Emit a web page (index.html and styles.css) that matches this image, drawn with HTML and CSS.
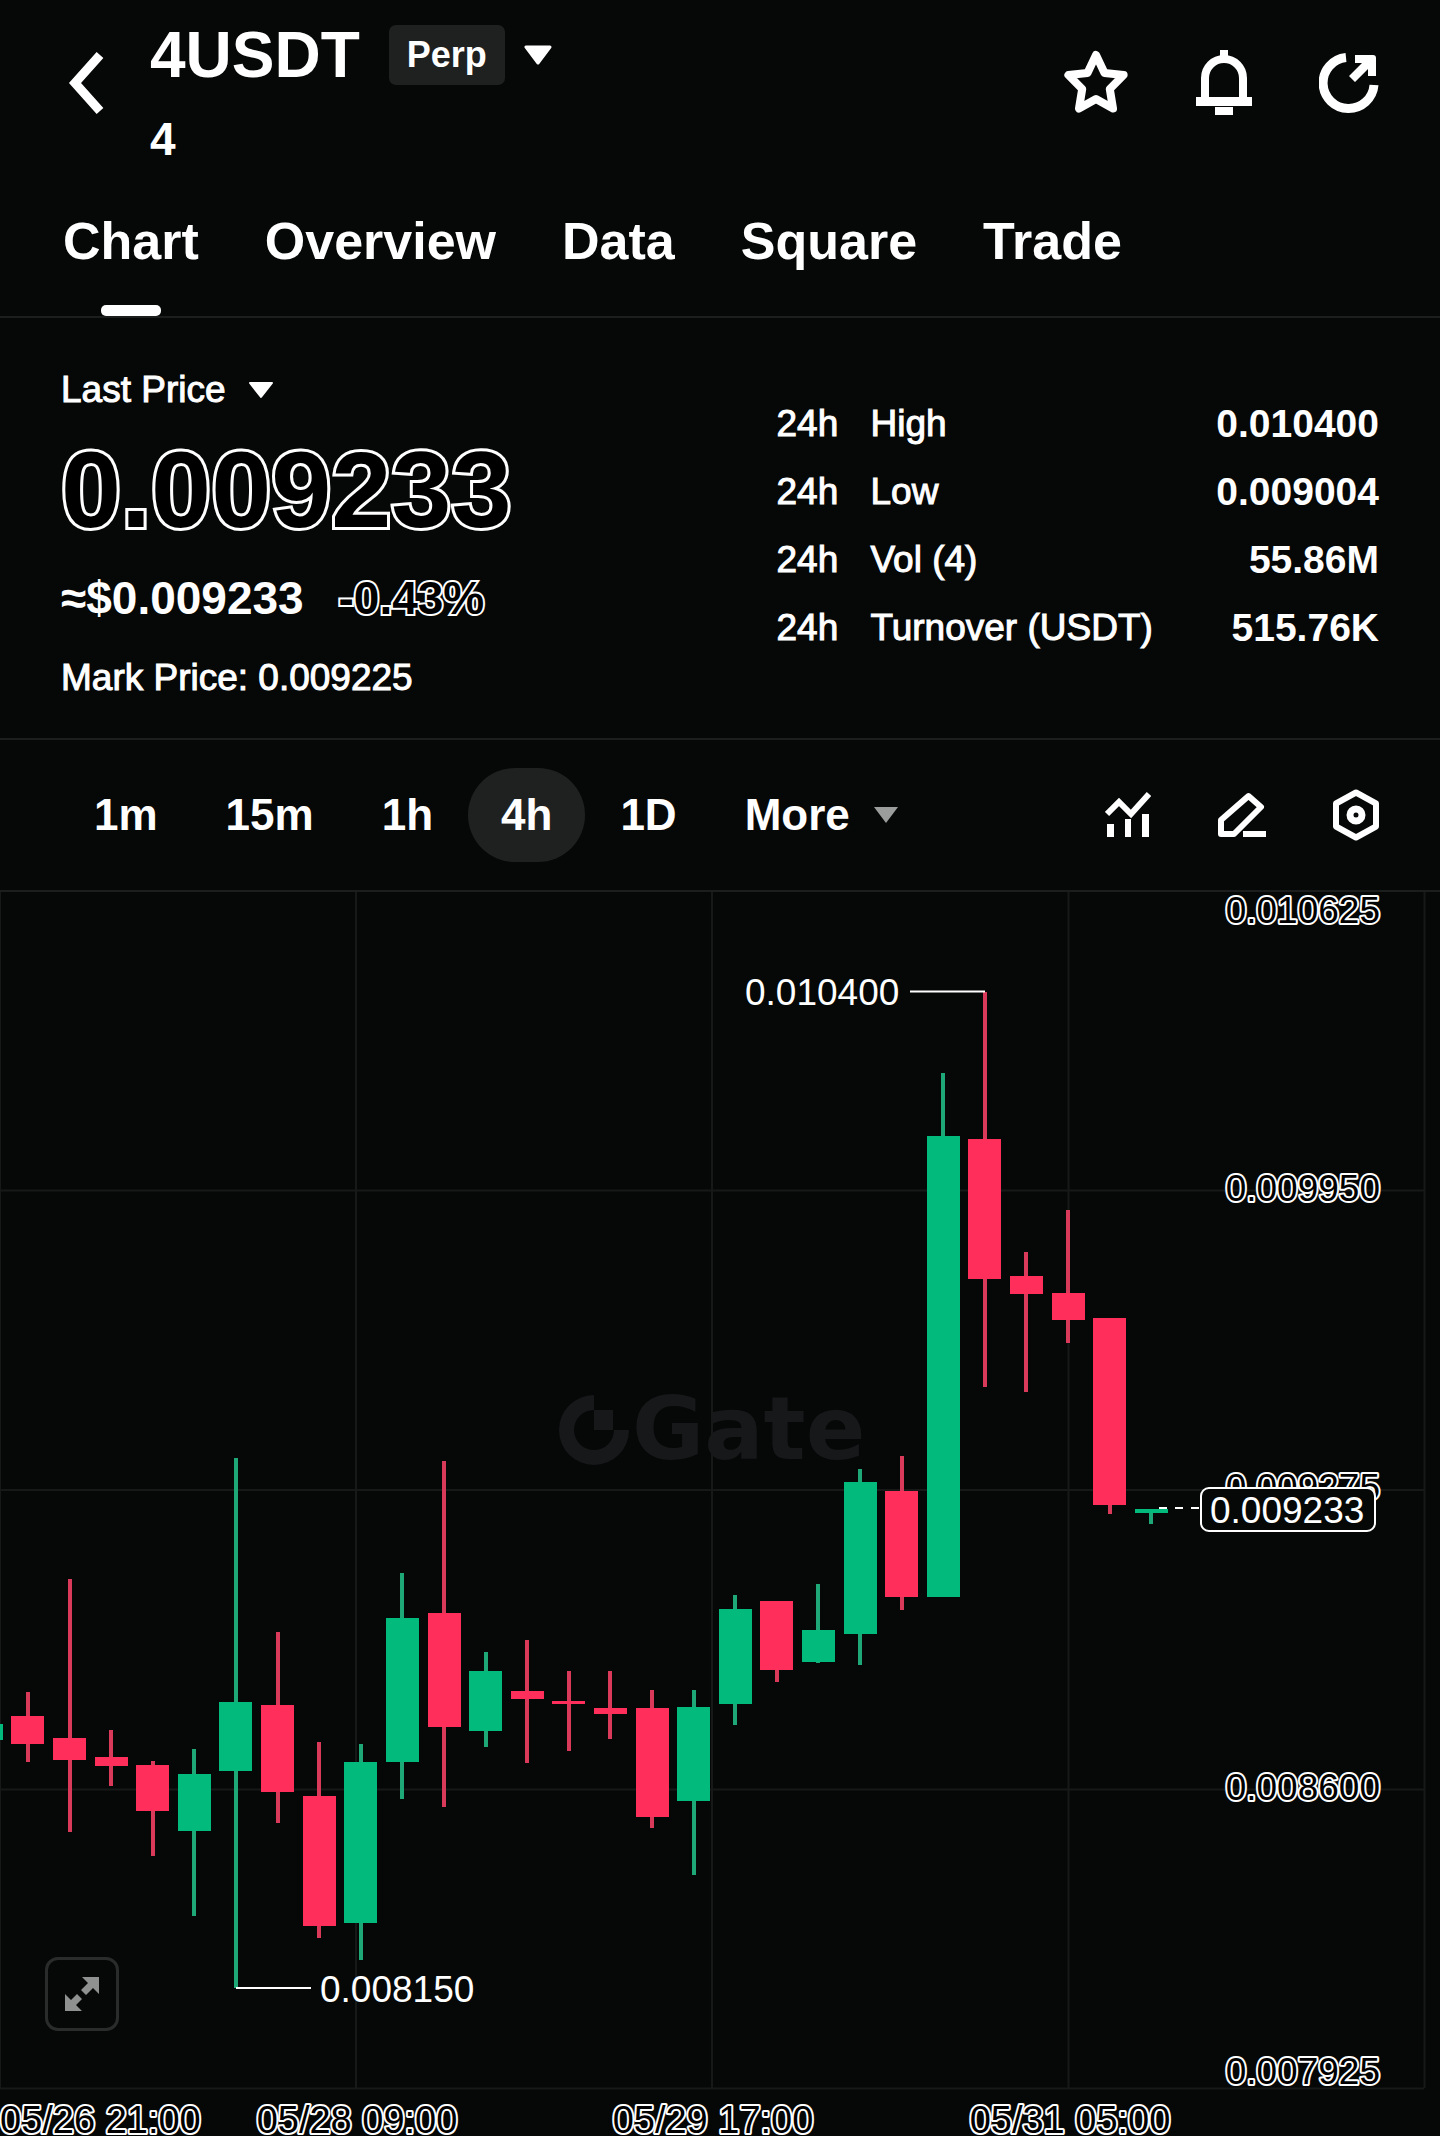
FILE: index.html
```html
<!DOCTYPE html>
<html lang="en">
<head>
  <meta charset="UTF-8">
  <meta name="viewport" content="width=device-width, initial-scale=1">
  <title>4USDT Perp</title>
  <link rel="stylesheet" href="styles.css">
</head>
<body>
  <header class="header">
    <button type="button" class="icon-btn back" aria-label="Back">
      <svg width="36" height="62" viewBox="0 0 36 62"><path d="M32 3L7 31L32 59" fill="none" stroke="currentColor" stroke-width="9"/></svg>
    </button>
    <div class="title">
      <div class="title-row">
        <h1>4USDT</h1>
        <span class="badge">Perp</span>
        <button type="button" class="icon-btn" aria-label="Select market">
          <svg width="28" height="20" viewBox="0 0 28 20"><path d="M2 2H26L14 18Z" fill="currentColor" stroke="currentColor" stroke-width="3" stroke-linejoin="round"/></svg>
        </button>
      </div>
      <p class="coin">4</p>
    </div>
    <div class="icons">
      <button type="button" class="icon-btn" aria-label="Favourite">
        <svg width="66" height="66" viewBox="0 0 66 66"><path d="M33 5L41.5 23L60.6 25L46.8 39L50 58.5L33 49L16 58.5L19.2 39L5.4 25L24.5 23Z" fill="none" stroke="currentColor" stroke-width="8" stroke-linejoin="round"/></svg>
      </button>
      <button type="button" class="icon-btn" aria-label="Alerts">
        <svg width="56" height="66" viewBox="0 0 56 66">
          <path d="M9 50V28a19 19 0 0 1 38 0V50" fill="none" stroke="currentColor" stroke-width="8"/>
          <path d="M24 0h8v8h-8zM0 47h56v9h-56zM19 57h18v8h-18z" fill="currentColor"/>
        </svg>
      </button>
      <button type="button" class="icon-btn" aria-label="Share">
        <svg width="60" height="60" viewBox="0 0 60 60">
          <path d="M27 4.6A25.5 25.5 0 1 0 55 32" fill="none" stroke="currentColor" stroke-width="9"/>
          <path d="M36 2H54a3 3 0 0 1 3 3V23H49V16L36 29L30 23L43 10H36Z" fill="currentColor"/>
        </svg>
      </button>
    </div>
  </header>

  <nav class="tabs">
    <a href="#chart" class="active">Chart</a>
    <a href="#overview">Overview</a>
    <a href="#data">Data</a>
    <a href="#square">Square</a>
    <a href="#trade">Trade</a>
  </nav>

  <section class="ticker">
    <div class="price">
      <button type="button" class="price-type">
        Last Price
        <svg width="26" height="18" viewBox="0 0 26 18"><path d="M2 2H24L13 16Z" fill="currentColor" stroke="currentColor" stroke-width="2" stroke-linejoin="round"/></svg>
      </button>
      <div class="last outline">0.009233</div>
      <div class="usd">≈$0.009233 <span class="change outline">-0.43%</span></div>
      <div class="mark">Mark Price: 0.009225</div>
    </div>
    <table class="stats">
      <tr><td class="period">24h</td><th scope="row">High</th><td class="value">0.010400</td></tr>
      <tr><td class="period">24h</td><th scope="row">Low</th><td class="value">0.009004</td></tr>
      <tr><td class="period">24h</td><th scope="row">Vol (4)</th><td class="value">55.86M</td></tr>
      <tr><td class="period">24h</td><th scope="row">Turnover (USDT)</th><td class="value">515.76K</td></tr>
    </table>
  </section>

  <div class="toolbar">
    <div class="frames">
      <button type="button">1m</button>
      <button type="button">15m</button>
      <button type="button">1h</button>
      <button type="button" class="active">4h</button>
      <button type="button">1D</button>
      <button type="button" class="more">
        More
        <svg width="24" height="16" viewBox="0 0 24 16"><path d="M0 0H24L12 16Z" fill="#9b9d9d"/></svg>
      </button>
    </div>
    <div class="icons">
      <button type="button" class="icon-btn" aria-label="Indicators">
        <svg width="46" height="52" viewBox="0 -3 46 52">
          <path d="M2 22L14 10L26 22L44 2" fill="none" stroke="currentColor" stroke-width="6"/>
          <path d="M2 32h7v13h-7zM20 27h6v18h-6zM37 22h7v23h-7z" fill="currentColor"/>
        </svg>
      </button>
      <button type="button" class="icon-btn" aria-label="Draw">
        <svg width="48" height="52" viewBox="0 -3 48 52">
          <path d="M3 42V28L30.5 4L43 15L16 42Z" fill="none" stroke="currentColor" stroke-width="6" stroke-linejoin="round"/>
          <path d="M25 39h23v6h-23z" fill="currentColor"/>
        </svg>
      </button>
      <button type="button" class="icon-btn" aria-label="Settings">
        <svg width="46" height="52" viewBox="0 0 46 52">
          <path d="M23 3.5L43 14.5V37.5L23 48.5L3 37.5V14.5Z" fill="none" stroke="currentColor" stroke-width="6" stroke-linejoin="round"/>
          <circle cx="23" cy="26" r="6" fill="none" stroke="currentColor" stroke-width="7"/>
        </svg>
      </button>
    </div>
  </div>

  <main class="chart" id="chart">
    <svg class="plot" viewBox="0 0 1440 1244">
      <!-- watermark -->
      <g class="watermark">
        <path d="M594 503a35 35 0 1 0 35 35h-15a20 20 0 1 1 -20 -20z"/>
        <path d="M594 518h19v20h-19z"/>
        <text x="632" y="567">Gate</text>
      </g>

      <path class="grid" d="M0 298.5H1424M0 598H1424M0 897.5H1424M0 1196.5H1424M0 0V1196M356 0V1196M712 0V1196M1068.5 0V1196M1424.5 0V1196"/>

      <g class="axis">
        <text x="1380" y="31">0.010625</text>
        <text x="1380" y="309">0.009950</text>
        <text x="1380" y="608">0.009275</text>
        <text x="1380" y="908">0.008600</text>
        <text x="1380" y="1192">0.007925</text>
      </g>
      <g class="dates">
        <text class="first" x="0" y="1241">05/26 21:00</text>
        <text x="357" y="1241">05/28 09:00</text>
        <text x="713" y="1241">05/29 17:00</text>
        <text x="1070" y="1241">05/31 05:00</text>
      </g>

      <!-- candles: wick path, then body -->
      <g class="down">
        <path d="M28 800V870M70 687V940M111 838V894M153 869V964M278 740V931M319 850V1046M444 569V915M527 748V871M569 779V859M610 779V847M652 798V936M777 709V790M902 564V718M985 100V495M1026 360V500M1068 318V451M1110 426V622"/>
        <rect x="11" y="824" width="33" height="28"/>
        <rect x="53" y="846" width="33" height="22"/>
        <rect x="95" y="865" width="33" height="9"/>
        <rect x="136" y="873" width="33" height="46"/>
        <rect x="261" y="813" width="33" height="87"/>
        <rect x="303" y="904" width="33" height="130"/>
        <rect x="428" y="721" width="33" height="114"/>
        <rect x="511" y="799" width="33" height="8"/>
        <rect x="552" y="809" width="33" height="3"/>
        <rect x="594" y="816" width="33" height="6"/>
        <rect x="636" y="816" width="33" height="109"/>
        <rect x="760" y="709" width="33" height="69"/>
        <rect x="885" y="599" width="33" height="106"/>
        <rect x="968" y="247" width="33" height="140"/>
        <rect x="1010" y="384" width="33" height="18"/>
        <rect x="1052" y="401" width="33" height="27"/>
        <rect x="1093" y="426" width="33" height="187"/>
      </g>
      <g class="up">
        <path d="M194 857V1024M236 566V1096M361 852V1068M402 681V907M486 760V855M694 798V983M735 703V833M818 692V771M860 577V773M943 181V705M1151 617V632"/>
        <rect x="0" y="832" width="3" height="16"/>
        <rect x="178" y="882" width="33" height="57"/>
        <rect x="219" y="810" width="33" height="69"/>
        <rect x="344" y="870" width="33" height="161"/>
        <rect x="386" y="726" width="33" height="144"/>
        <rect x="469" y="779" width="33" height="60"/>
        <rect x="677" y="815" width="33" height="94"/>
        <rect x="719" y="717" width="33" height="95"/>
        <rect x="802" y="738" width="33" height="32"/>
        <rect x="844" y="590" width="33" height="152"/>
        <rect x="927" y="244" width="33" height="461"/>
        <rect x="1135" y="617" width="33" height="4"/>
      </g>

      <!-- high, low and current price -->
      <g class="marks">
        <path d="M910 99.5H985M236 1096H311"/>
        <path d="M1159 616H1200" stroke-dasharray="8 8"/>
        <rect x="1201" y="596" width="174" height="43" rx="8"/>
        <text x="745" y="113">0.010400</text>
        <text x="320" y="1110">0.008150</text>
        <text x="1210" y="631">0.009233</text>
      </g>
    </svg>
    <button type="button" class="fullscreen" aria-label="Full screen">
      <svg width="36" height="36" viewBox="0 0 36 36">
        <path d="M18 1H35V18L29 12L22 19L17 14L24 7ZM1 18L7 24L13 18L18 23L12 29L18 35H1Z" fill="#8f9191"/>
      </svg>
    </button>
  </main>
</body>
</html>
```
FILE: styles.css
```css
* {
  box-sizing: border-box;
}
body {
  margin: 0;
  background: #060807;
  color: #fff;
  font-family: "Liberation Sans", Arial, sans-serif;
  font-size: 37px;
  line-height: 48px;
}
button {
  padding: 0;
  border: none;
  background: none;
  color: inherit;
  font: inherit;
  cursor: pointer;
}
svg {
  display: block;
}
h1, p {
  margin: 0;
}
.icon-btn {
  display: block;
}
.icons {
  display: flex;
  align-items: center;
  gap: 67px;
}
.outline {
  color: #000;
  -webkit-text-stroke: 4px #fff;
  paint-order: stroke fill;
}

/* header */
.header {
  display: flex;
  align-items: center;
  height: 166px;
  padding: 0 61px 0 68px;
}
.title {
  flex: 1;
  margin-left: 46px;
}
.title-row {
  display: flex;
  align-items: center;
  height: 60px;
  margin: 24px 0 28px;
}
h1 {
  font-size: 64px;
  line-height: 60px;
}
.badge {
  margin: 0 19px 0 29px;
  padding: 0 18px;
  border-radius: 7px;
  background: #1f2121;
  font-size: 36px;
  font-weight: bold;
  line-height: 60px;
}
.coin {
  font-size: 46px;
  font-weight: bold;
  line-height: 52px;
}

/* tabs */
.tabs {
  display: flex;
  gap: 66px;
  height: 152px;
  padding: 0 63px;
  border-bottom: 2px solid #1c1e1e;
  font-size: 52px;
  font-weight: bold;
  line-height: 150px;
}
.tabs a {
  position: relative;
  color: inherit;
  text-decoration: none;
}
.tabs .active::after {
  content: "";
  position: absolute;
  bottom: 0;
  left: 50%;
  width: 60px;
  height: 11px;
  margin-left: -30px;
  border-radius: 5px;
  background: #fff;
}

/* ticker */
.ticker {
  display: grid;
  grid-template-columns: 19fr 16fr;
  align-items: start;
  padding: 48px 61px 36px;
  border-bottom: 2px solid #1c1e1e;
}
.price {
  display: flex;
  flex-direction: column;
  align-items: flex-start;
  gap: 26px;
}
.price-type {
  display: flex;
  align-items: center;
  gap: 22px;
}
.price-type, .mark, .period, .stats th {
  -webkit-text-stroke: 1px currentColor;
}
.last {
  margin-bottom: 6px;
  font-size: 108px;
  font-weight: bold;
  line-height: 100px;
  -webkit-text-stroke-width: 6px;
}
.usd {
  font-size: 46px;
  font-weight: bold;
  line-height: 52px;
}
.change {
  margin-left: 22px;
}
.mark {
  margin-top: 4px;
}
.stats {
  width: 100%;
  margin-top: 24px;
  border-collapse: collapse;
}
.stats td, .stats th {
  height: 68px;
  padding: 0;
  font-weight: normal;
  text-align: left;
}
.stats .period {
  width: 94px;
}
.stats .value {
  font-size: 39px;
  font-weight: bold;
  text-align: right;
}

/* timeframes */
.toolbar {
  display: flex;
  align-items: center;
  justify-content: space-between;
  padding: 28px 61px;
  border-bottom: 2px solid #1c1e1e;
}
.frames {
  display: flex;
  gap: 2px;
  font-size: 44px;
  font-weight: bold;
  line-height: 94px;
}
.frames button {
  padding: 0 33px;
  border-radius: 47px;
}
.frames .active {
  background: #1f2121;
}
.frames .more {
  display: flex;
  align-items: center;
  gap: 24px;
}

/* chart */
.chart {
  position: relative;
}
.plot {
  width: 100%;
  height: auto;
}
.watermark {
  fill: #16181a;
  font: bold 88px "DejaVu Sans", sans-serif;
}
.grid {
  fill: none;
  stroke: #171919;
  stroke-width: 2;
}
.axis, .dates {
  fill: #000;
  stroke: #fff;
  stroke-width: 4;
  stroke-linejoin: round;
  paint-order: stroke fill;
}
.axis {
  text-anchor: end;
}
.dates {
  font-size: 38px;
  text-anchor: middle;
}
.dates .first {
  text-anchor: start;
}
.up path, .down path {
  stroke-width: 4;
}
.up {
  fill: #02ba7c;
}
.up path {
  stroke: #1fa877;
}
.down {
  fill: #ff2e5b;
}
.down path {
  stroke: #d93a5a;
}
.marks path, .marks rect {
  fill: #060807;
  stroke: #fff;
  stroke-width: 2;
}
.marks text {
  fill: #fff;
}
.fullscreen {
  position: absolute;
  bottom: 105px;
  left: 45px;
  display: flex;
  align-items: center;
  justify-content: center;
  width: 74px;
  height: 74px;
  border: 3px solid #2a2c2c;
  border-radius: 13px;
}
```
